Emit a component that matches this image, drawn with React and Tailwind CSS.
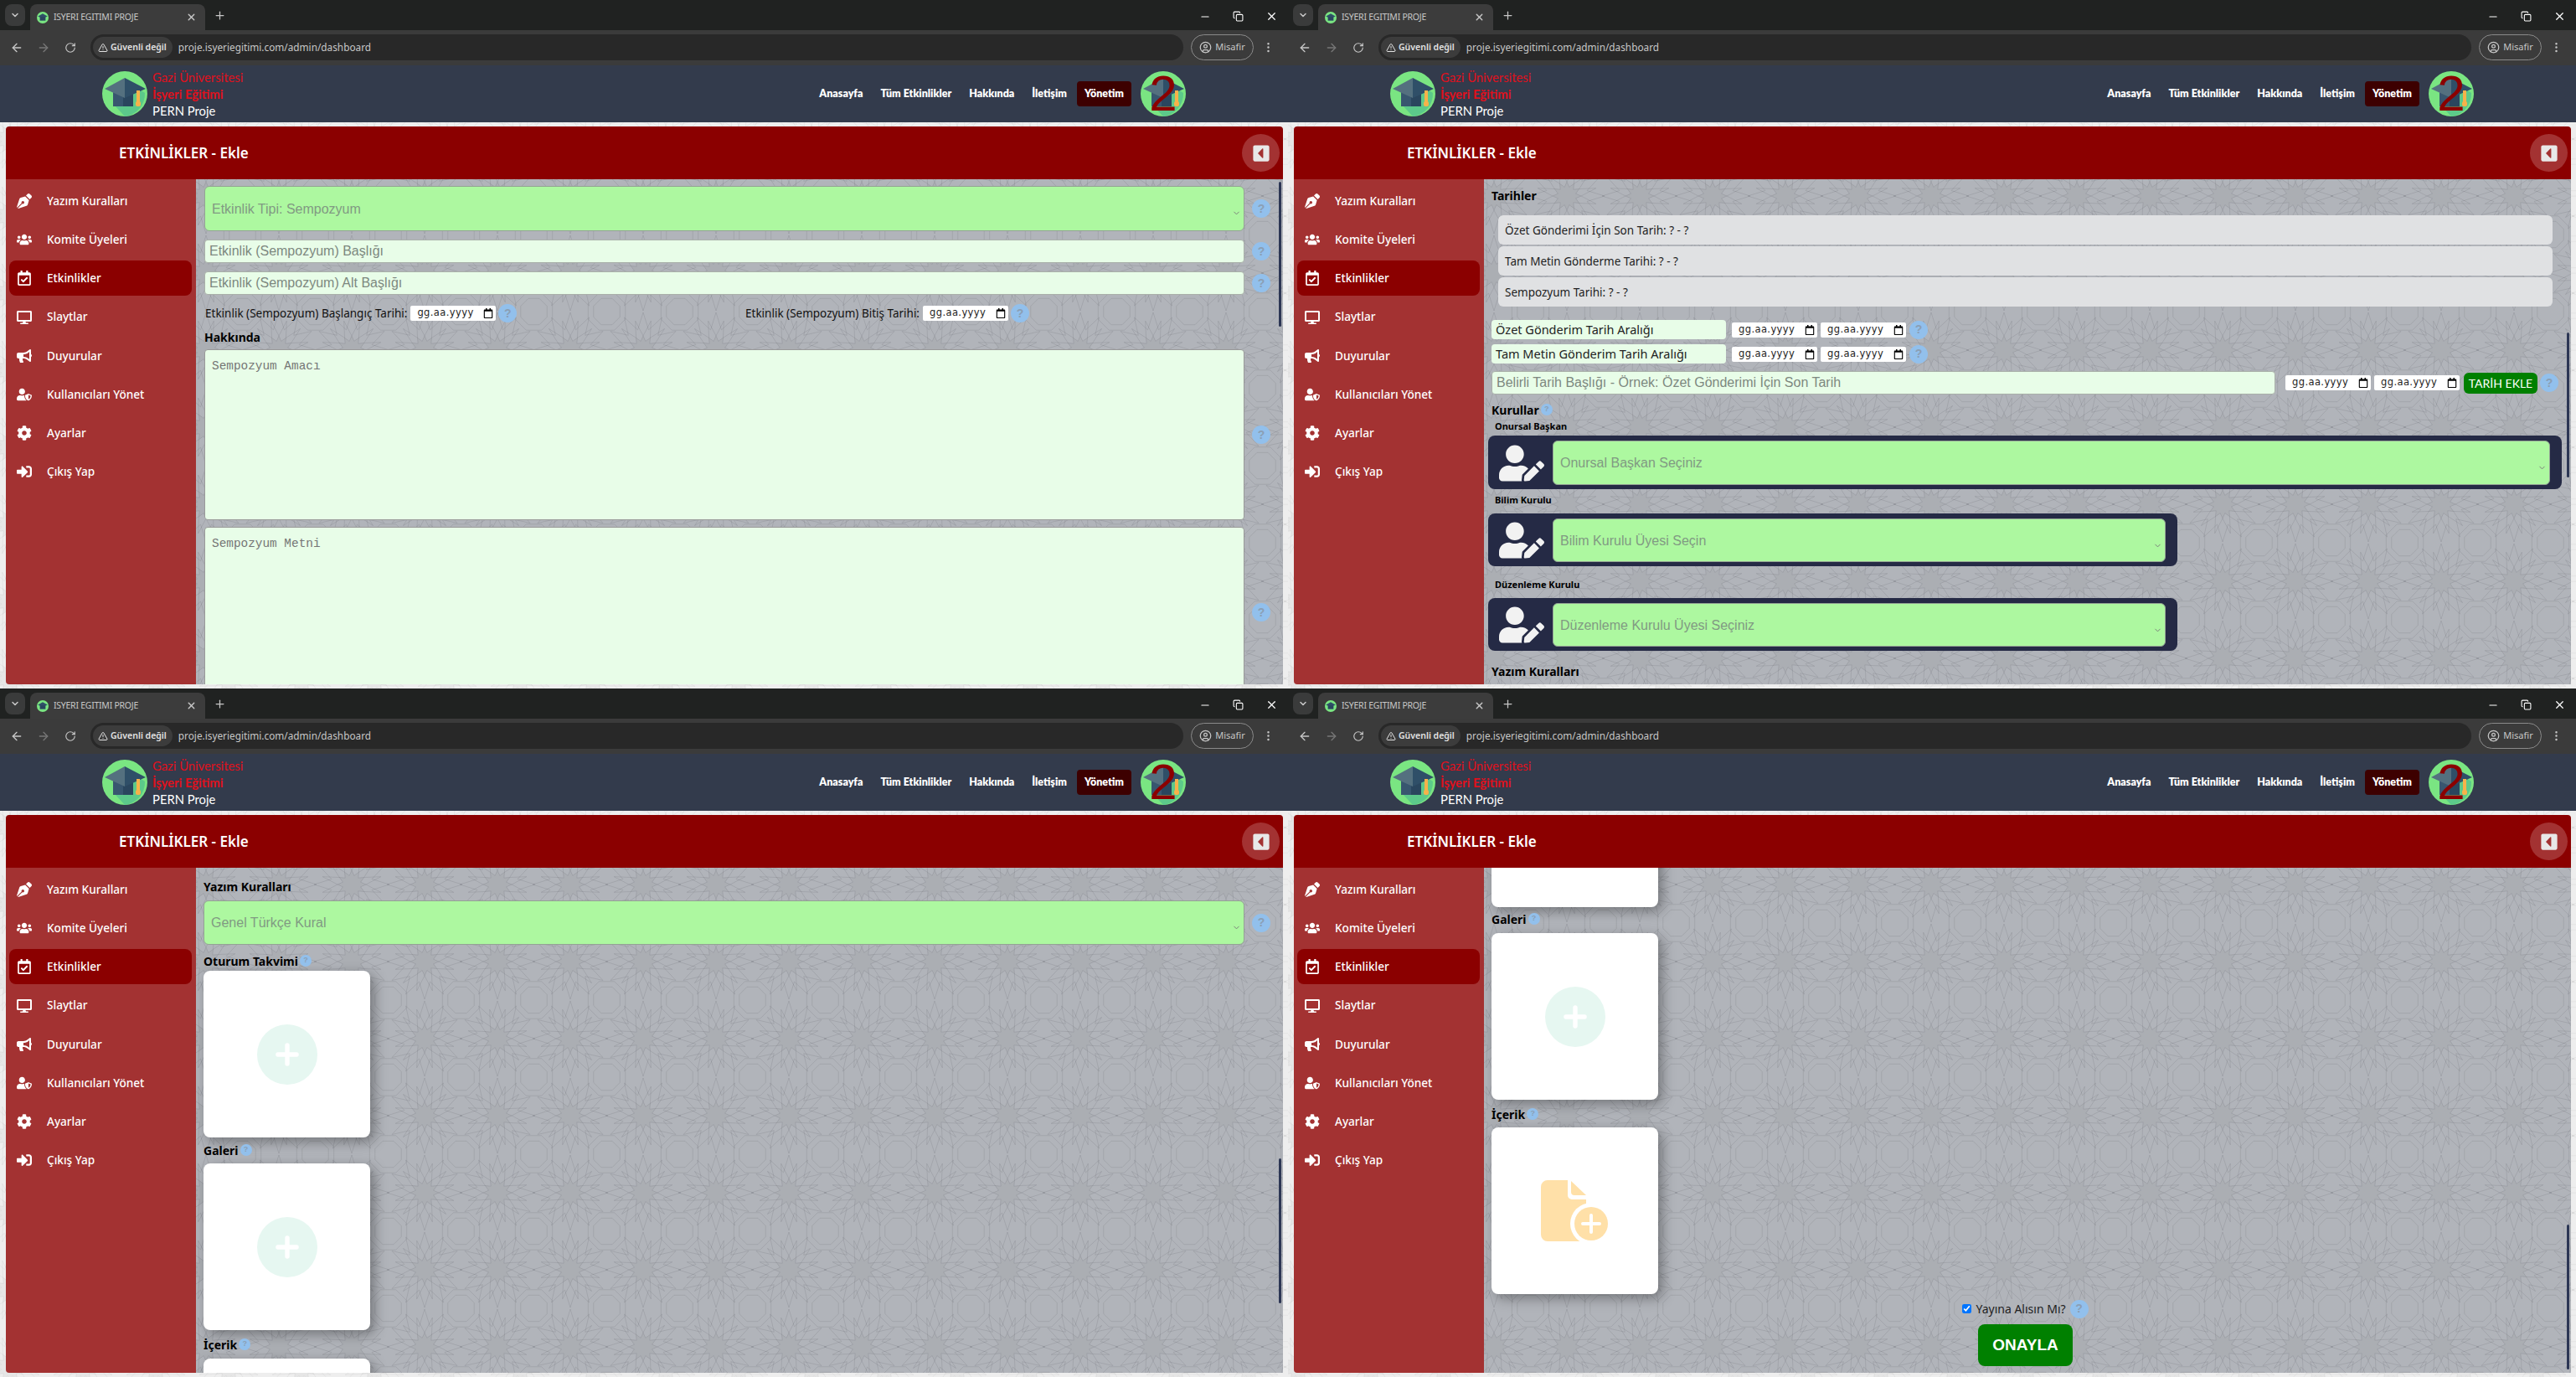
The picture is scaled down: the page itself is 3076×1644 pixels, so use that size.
import { ArrowLeft, ArrowRight, RotateCw, X, Plus, Minus, ChevronDown, EllipsisVertical, TriangleAlert, CircleUser, Copy, ChevronDown as Chevron } from 'lucide-react'
import {
  FaPenNib, FaUsers, FaRegCalendarCheck, FaDesktop, FaBullhorn, FaUserShield, FaCog, FaSignInAlt, FaCaretSquareLeft, FaUserEdit, FaRegCalendar,
} from 'react-icons/fa'

const UI = "font-['Noto_Sans',sans-serif]"
const LATO = "font-['Lato',sans-serif]"
const ARIAL = "font-['Liberation_Sans',sans-serif]"

const starPoints = (cx, cy, R, r, n, rot = 0) => {
  const pts = []
  for (let i = 0; i < n * 2; i++) {
    const a = rot + (Math.PI * i) / n
    const rad = i % 2 === 0 ? R : r
    pts.push(`${(cx + rad * Math.sin(a)).toFixed(1)},${(cy - rad * Math.cos(a)).toFixed(1)}`)
  }
  return pts.join(' ')
}

// islamic star tile, rosette on the corners and octagon in the middle
function Rosette({ cx, cy }) {
  return (
    <g>
      <polygon points={starPoints(cx, cy, 17, 11, 12)} fill="rgba(0,0,0,0.035)" />
      <polygon points={starPoints(cx, cy, 45, 25, 12)} fill="none" />
      <polygon points={starPoints(cx, cy, 36, 17, 12, Math.PI / 12)} fill="none" />
    </g>
  )
}

function Pattern({ id, stroke }) {
  return (
    <svg className="absolute inset-0 w-full h-full pointer-events-none" aria-hidden="true">
      <defs>
        <pattern id={id} width="87" height="92" patternUnits="userSpaceOnUse" patternTransform="translate(12 20)">
          <g stroke={stroke} strokeWidth="1">
            <Rosette cx={0} cy={0} />
            <Rosette cx={87} cy={0} />
            <Rosette cx={0} cy={92} />
            <Rosette cx={87} cy={92} />
            <polygon points={starPoints(43.5, 46, 17, 17, 4, Math.PI / 8)} fill="none" />
            <polygon points={starPoints(43.5, 46, 24, 24, 4, Math.PI / 8)} fill="none" />
          </g>
        </pattern>
      </defs>
      <rect width="100%" height="100%" fill={`url(#${id})`} />
    </svg>
  )
}

function CapLogo() {
  return (
    <svg viewBox="0 0 54 54" className="w-[54px] h-[54px] shrink-0">
      <circle cx="27" cy="27" r="27" fill="#7ae582" />
      <path d="M15 41 L36 16 L51 26 A27 27 0 0 1 27 54 Z" fill="#5cc98a" />
      <rect x="13" y="21" width="12" height="21" fill="#38566f" />
      <rect x="25" y="21" width="12" height="21" fill="#2a465e" />
      <polygon points="3,21 27,8 27,32" fill="#54707f" />
      <polygon points="27,8 52,21 27,32" fill="#2f4f68" />
      <rect x="41" y="23" width="4" height="15" fill="#f7b24a" />
      <rect x="40" y="36" width="6" height="6" rx="2" fill="#f7b24a" />
    </svg>
  )
}

function BrowserChrome() {
  return (
    <div className={`${UI} shrink-0 text-[#c7c7c7]`}>
      <div className="h-[36px] bg-[#202221] flex items-end pl-[6px] pr-[12px] relative">
        <div className="w-[24px] h-[26px] mb-[5px] bg-[#3a3b3b] rounded-lg flex items-center justify-center">
          <ChevronDown size={12} strokeWidth={3} />
        </div>
        <div className="ml-[6px] w-[209px] h-[31px] bg-[#3c3c3c] rounded-t-lg flex items-center pl-[8px] pr-[10px]">
          <svg viewBox="0 0 54 54" className="w-[14px] h-[14px] shrink-0">
            <circle cx="27" cy="27" r="27" fill="#7ae582" />
            <polygon points="5,21 27,9 49,21 27,32" fill="#2f4f68" />
            <rect x="14" y="24" width="26" height="17" fill="#2a465e" />
          </svg>
          <span className="ml-[6px] text-[10.5px] tracking-[-0.25px] flex-1 whitespace-nowrap">ISYERI EGITIMI PROJE</span>
          <X size={13} strokeWidth={2.5} />
        </div>
        <Plus size={15} className="mb-[10px] ml-[10px]" />
        <div className="ml-auto flex items-center gap-[26px] mb-[9px] text-white">
          <Minus size={14} />
          <Copy size={13} />
          <X size={15} />
        </div>
      </div>
      <div className="h-[42px] bg-[#3b3b3b] flex items-center pl-[12px] pr-[12px] pb-[1px]">
        <ArrowLeft size={16} />
        <ArrowRight size={16} className="ml-[16px] text-[#777]" />
        <RotateCw size={14} className="ml-[17px]" />
        <div className="ml-[17px] flex-1 h-[31px] rounded-full bg-[#282828] flex items-center pl-[3px]">
          <div className="h-[25px] pl-[6px] pr-[7px] rounded-full bg-[#3c3c3c] flex items-center gap-[3px] text-[10.5px] font-semibold text-[#e3e3e3] whitespace-nowrap">
            <TriangleAlert size={12} />
            Güvenli değil
          </div>
          <span className="ml-[7px] text-[11.8px] text-[#c7c7c7] whitespace-nowrap">proje.isyeriegitimi.com/admin/dashboard</span>
        </div>
        <div className="ml-[9px] w-[75px] h-[31px] rounded-full border border-[#8a8a8a] flex items-center justify-center gap-[4px] text-[11px] text-[#c7c7c7]">
          <CircleUser size={15} />
          Misafir
        </div>
        <EllipsisVertical size={15} className="ml-[10px] mr-[4px]" />
      </div>
    </div>
  )
}

function TopNav() {
  const links = ['Anasayfa', 'Tüm Etkinlikler', 'Hakkında', 'İletişim']
  return (
    <div className={`${LATO} shrink-0 relative h-[68px] bg-[#333b4c] flex items-center px-[122px]`}>
      <CapLogo />
      <div className="ml-[6px] text-[14.8px] leading-[20px]">
        <div className="text-[#e0101c]">Gazi Üniversitesi</div>
        <div className="text-[#e0101c] font-bold">İşyeri Eğitimi</div>
        <div className="text-white">PERN Proje</div>
      </div>
      <div className="ml-auto flex items-center gap-[21px] text-white text-[12.5px] font-extrabold">
        {links.map((l) => (
          <span key={l}>{l}</span>
        ))}
        <span className="-ml-[9px] h-[30px] px-[9px] flex items-center bg-[#3d0000] rounded">Yönetim</span>
      </div>
      <div className="relative ml-[11px]">
        <CapLogo />
        <span className={`${ARIAL} absolute inset-0 flex items-center justify-center text-[60px] leading-none text-[#8b0000]`}>2</span>
      </div>
    </div>
  )
}

const MENU = [
  ['Yazım Kuralları', FaPenNib],
  ['Komite Üyeleri', FaUsers],
  ['Etkinlikler', FaRegCalendarCheck],
  ['Slaytlar', FaDesktop],
  ['Duyurular', FaBullhorn],
  ['Kullanıcıları Yönet', FaUserShield],
  ['Ayarlar', FaCog],
  ['Çıkış Yap', FaSignInAlt],
]

function Sidebar() {
  return (
    <div className={`${UI} w-[227px] shrink-0 bg-[#a33232] rounded-bl pt-[5px] pl-[4px] pr-[5px] flex flex-col gap-[4.2px] text-white`}>
      {MENU.map(([label, Icon]) => (
        <div key={label} className={`h-[42px] flex items-center pl-[9px] rounded-lg text-[13.6px] font-medium ${label === 'Etkinlikler' ? 'bg-[#8b0000]' : ''}`}>
          <span className="w-[18px] flex justify-center"><Icon size={18} /></span>
          <span className="ml-[18px]">{label}</span>
        </div>
      ))}
    </div>
  )
}

function Help({ small }) {
  return (
    <span className={`${ARIAL} shrink-0 rounded-full bg-[#92c0ec] text-[#8b9fb5] font-bold flex items-center justify-center ${small ? 'w-[14px] h-[14px] text-[9px]' : 'w-[22px] h-[22px] text-[14px]'}`}>?</span>
  )
}

function Heading({ children, help, className = '' }) {
  return (
    <div className={`${UI} flex items-center gap-[2px] h-[20px] text-[14px] font-bold text-black ${className}`}>
      {children}
      {help && <Help small />}
    </div>
  )
}

function GreenSelect({ label, className = '', pad = 'pl-[8px]' }) {
  return (
    <div className={`${ARIAL} relative flex items-center ${pad} pt-[1px] bg-[#adf8a0] border border-[#94a394] rounded-md text-[16px] text-[#819a83] ${className}`}>
      {label}
      <Chevron size={11} className="absolute right-[3px] top-[26px] text-[#777]" />
    </div>
  )
}

function TextField({ label, className = '', dark }) {
  return (
    <div className={`${ARIAL} flex items-center pl-[5px] bg-[#e8fde8] border border-[#a9b0a9] rounded text-[16px] ${dark ? 'text-[#333]' : 'text-[#7d887f]'} ${className}`}>
      {label}
    </div>
  )
}

function DateBox() {
  return (
    <div className="w-[102px] h-[18px] shrink-0 bg-white flex items-center justify-between pl-[8px] pr-[3px] font-['DejaVu_Sans',sans-serif] text-[11.5px] tracking-[0.4px] text-[#222] rounded-[2px]">
      gg.aa.yyyy
      <FaRegCalendar size={12} className="text-black" />
    </div>
  )
}

function UploadCard({ className = '', children }) {
  return (
    <div className={`w-[199px] h-[199px] bg-white rounded-lg shadow-[5px_5px_15px_rgba(0,0,0,0.35)] flex items-center justify-center ${className}`}>
      {children}
    </div>
  )
}

function PlusCircle() {
  return (
    <div className="w-[72px] h-[72px] rounded-full bg-[#e6f7f1] flex items-center justify-center text-white">
      <Plus size={38} strokeWidth={3.4} />
    </div>
  )
}

function FileIcon() {
  return (
    <svg viewBox="0 0 82 73" className="w-[82px] h-[73px]">
      <path d="M8 0H32V18a5 5 0 0 0 5 5H54V73H8a8 8 0 0 1-8-8V8a8 8 0 0 1 8-8z" fill="#ffe0a8" />
      <path d="M36 1L54 18H40a4 4 0 0 1-4-4z" fill="#ffe0a8" />
      <circle cx="60" cy="52" r="25" fill="white" />
      <circle cx="60" cy="52" r="20" fill="#ffe0a8" />
      <path d="M60 42V62M50 52H70" stroke="white" strokeWidth="4" strokeLinecap="round" />
    </svg>
  )
}

function Kurul({ label, placeholder, labelClass, barClass }) {
  return (
    <>
      <div className={`${UI} pl-[4px] h-[16px] leading-[16px] text-[11px] font-bold text-black ${labelClass}`}>{label}</div>
      <div className={`-ml-[4px] bg-[#252a45] rounded-lg flex items-stretch pt-[6px] pb-[5px] pr-[14px] ${barClass}`}>
        <div className="w-[77px] shrink-0 flex items-center justify-center text-[#f2f2f2]">
          <FaUserEdit size={54} className="ml-[2px]" />
        </div>
        <GreenSelect label={placeholder} className="flex-1" />
      </div>
    </>
  )
}

function EventForm() {
  return (
    <div className="pl-[10px] pr-[15px] pt-[8px]">
      <div className="flex items-center gap-[9px]">
        <GreenSelect label="Etkinlik Tipi: Sempozyum" className="flex-1 h-[54px]" />
        <Help />
      </div>
      <div className="flex items-center gap-[9px] mt-[10px]">
        <TextField label="Etkinlik (Sempozyum) Başlığı" className="flex-1 h-[28px]" />
        <Help />
      </div>
      <div className="flex items-center gap-[9px] mt-[10px]">
        <TextField label="Etkinlik (Sempozyum) Alt Başlığı" className="flex-1 h-[28px]" />
        <Help />
      </div>
      <div className={`${UI} grid grid-cols-[645px_1fr] mt-[11px] pl-[1px] text-[13.5px] text-[#111]`}>
        <div className="flex items-center gap-[3px]">
          <span className="mr-[1px]">Etkinlik (Sempozyum) Başlangıç Tarihi:</span><DateBox /><Help />
        </div>
        <div className="flex items-center gap-[3px]">
          <span className="mr-[1px]">Etkinlik (Sempozyum) Bitiş Tarihi:</span><DateBox /><Help />
        </div>
      </div>
      <Heading className="mt-[7px]">Hakkında</Heading>
      <div className="flex items-center gap-[9px] mt-[5px]">
        <div className="flex-1 h-[204px] bg-[#e8fde8] border border-[#999] rounded pl-[8px] pt-[9px] font-['Liberation_Mono',monospace] text-[14.4px] text-[#757575]">Sempozyum Amacı</div>
        <Help />
      </div>
      <div className="flex items-center gap-[9px] mt-[8px]">
        <div className="flex-1 h-[204px] bg-[#e8fde8] border border-[#999] rounded pl-[8px] pt-[9px] font-['Liberation_Mono',monospace] text-[14.4px] text-[#757575]">Sempozyum Metni</div>
        <Help />
      </div>
    </div>
  )
}

function DatesForm() {
  const deadlines = ['Özet Gönderimi İçin Son Tarih: ? - ?', 'Tam Metin Gönderme Tarihi: ? - ?', 'Sempozyum Tarihi: ? - ?']
  return (
    <div className="pl-[9px] pr-[11px] pt-[9px]">
      <Heading>Tarihler</Heading>
      <div className="mt-[14px] ml-[8px] mr-[11px] flex flex-col gap-[2px]">
        {deadlines.map((d) => (
          <div key={d} className={`${UI} h-[35px] pt-[1px] bg-[#e0e1e3] rounded-md flex items-center pl-[8px] text-[13.5px] text-[#222]`}>{d}</div>
        ))}
      </div>
      <div className="mt-[16px] flex flex-col gap-[6px]">
        {['Özet Gönderim Tarih Aralığı', 'Tam Metin Gönderim Tarih Aralığı'].map((t) => (
          <div key={t} className="flex items-center">
            <div className={`${UI} w-[280px] h-[23px] flex items-center pl-[5px] bg-[#e8fde8] rounded text-[14.5px] text-[#222]`}>{t}</div>
            <div className="ml-[7px] flex items-center gap-[4px]">
              <DateBox /><DateBox />
            </div>
            <span className="ml-[4px]"><Help /></span>
          </div>
        ))}
      </div>
      <div className="mt-[9px] flex items-center">
        <TextField label="Belirli Tarih Başlığı - Örnek: Özet Gönderimi İçin Son Tarih" className="w-[936px] h-[28px]" />
        <div className="ml-[12px] flex items-center gap-[4px]">
          <DateBox /><DateBox />
        </div>
        <div className={`${LATO} ml-[5px] w-[88px] h-[25px] rounded-md bg-[#008000] text-white text-[14px] flex items-center justify-center`}>TARİH EKLE</div>
        <span className="ml-[3px]"><Help /></span>
      </div>
      <Heading help className="mt-[8px]">Kurullar</Heading>
      <Kurul label="Onursal Başkan" placeholder="Onursal Başkan Seçiniz" labelClass="mt-[2px]" barClass="mt-[3px] h-[64px]" />
      <Kurul label="Bilim Kurulu" placeholder="Bilim Kurulu Üyesi Seçin" labelClass="mt-[5px]" barClass="mt-[8px] h-[63px] w-[823px]" />
      <Kurul label="Düzenleme Kurulu" placeholder="Düzenleme Kurulu Üyesi Seçiniz" labelClass="mt-[14px]" barClass="mt-[8px] h-[63px] w-[823px]" />
      <Heading className="mt-[14px]">Yazım Kuralları</Heading>
    </div>
  )
}

function RulesForm() {
  return (
    <div className="pl-[9px] pr-[15px] pt-[12px]">
      <Heading>Yazım Kuralları</Heading>
      <div className="flex items-center gap-[9px] mt-[7px]">
        <GreenSelect label="Genel Türkçe Kural" className="flex-1 h-[53px]" />
        <Help />
      </div>
      <Heading help className="mt-[9px]">Oturum Takvimi</Heading>
      <UploadCard className="mt-[2px]"><PlusCircle /></UploadCard>
      <Heading help className="mt-[5px]">Galeri</Heading>
      <UploadCard className="mt-[6px]"><PlusCircle /></UploadCard>
      <Heading help className="mt-[7px]">İçerik</Heading>
      <UploadCard className="mt-[7px]" />
    </div>
  )
}

function UploadsForm() {
  return (
    <div className="pl-[9px] pr-[11px]">
      <UploadCard className="-mt-[152px]" />
      <Heading help className="mt-[4px]">Galeri</Heading>
      <UploadCard className="mt-[7px]"><PlusCircle /></UploadCard>
      <Heading help className="mt-[7px]">İçerik</Heading>
      <UploadCard className="mt-[6px]"><FileIcon /></UploadCard>
      <div className="mt-[7px] -ml-[3px] flex flex-col items-center">
        <div className={`${UI} flex items-center h-[21px] text-[14px] text-[#222]`}>
          <input type="checkbox" defaultChecked className="size-[11px] accent-[#0075ff] mr-[5px]" />
          Yayına Alısın Mı?
          <span className="ml-[5px]"><Help /></span>
        </div>
        <button className={`${ARIAL} mt-[8px] w-[113px] h-[50px] rounded-lg bg-[#008000] text-white text-[19px] font-bold`}>ONAYLA</button>
      </div>
    </div>
  )
}

function Window({ id, scrollClass, children }) {
  return (
    <div className="w-[1538px] h-[822px] flex flex-col overflow-hidden">
      <BrowserChrome />
      <TopNav />
      <div className="relative flex-1 min-h-0 bg-[#eeeeee] pt-[5px] pl-[7px] pr-[6px] pb-[5px]">
        <Pattern id={`${id}-page`} stroke="rgba(0,0,0,0.04)" />
        <div className="relative h-full flex flex-col rounded-t">
          <div className={`${UI} h-[63px] shrink-0 bg-[#8b0000] rounded-t flex items-center justify-between pl-[135px] pr-[4px] text-white`}>
            <span className="text-[17px] font-semibold">ETKİNLİKLER - Ekle</span>
            <span className="w-[45px] h-[45px] rounded-full bg-[#a33232] flex items-center justify-center text-[#e8e8e8]">
              <FaCaretSquareLeft size={22} />
            </span>
          </div>
          <div className="flex-1 min-h-0 flex">
            <Sidebar />
            <div className="relative flex-1 min-w-0 bg-[#b1b4ba] overflow-hidden">
              <Pattern id={`${id}-body`} stroke="rgba(40,40,50,0.11)" />
              <div className="relative">{children}</div>
              <div className={`absolute right-[2px] w-[3px] h-[173px] bg-[#2c3654] rounded ${scrollClass}`} />
            </div>
          </div>
        </div>
      </div>
    </div>
  )
}

export default function App() {
  return (
    <div className="w-[3076px] h-[1644px] grid grid-cols-2 overflow-hidden bg-[#eeeeee]">
      <Window id="w1" scrollClass="top-[3px]"><EventForm /></Window>
      <Window id="w2" scrollClass="top-[183px]"><DatesForm /></Window>
      <Window id="w3" scrollClass="top-[347px]"><RulesForm /></Window>
      <Window id="w4" scrollClass="top-[426px]"><UploadsForm /></Window>
    </div>
  )
}
